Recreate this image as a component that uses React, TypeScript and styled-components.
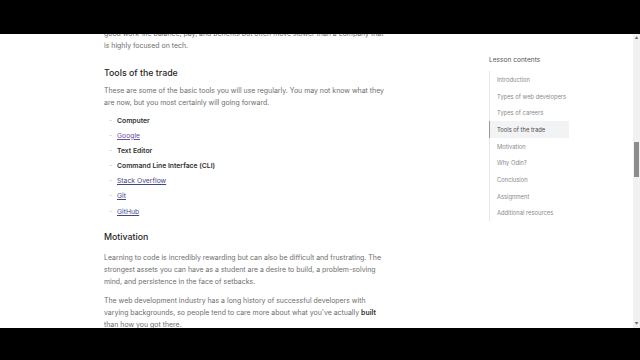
import styled, { createGlobalStyle } from "styled-components";

const GlobalStyle = createGlobalStyle`
  html, body {
    margin: 0;
    padding: 0;
    background: #000;
  }
  body {
    font-family: Inter, "Noto Sans", sans-serif;
    -webkit-font-smoothing: antialiased;
  }
`;

const tools = [
  { label: "Computer", link: false },
  { label: "Google", link: true, visited: true },
  { label: "Text Editor", link: false },
  { label: "Command Line Interface (CLI)", link: false },
  { label: "Stack Overflow", link: true },
  { label: "Git", link: true },
  { label: "GitHub", link: true },
];

const sections = [
  "Introduction",
  "Types of web developers",
  "Types of careers",
  "Tools of the trade",
  "Motivation",
  "Why Odin?",
  "Conclusion",
  "Assignment",
  "Additional resources",
];

const App = () => {
  return (
    <Frame>
      <GlobalStyle />
      <Letterbox $height={34} />
      <Viewport>
        <Article>
          <Paragraph>
            good work-life balance, pay, and benefits but often move slower than a company that
            is highly focused on tech.
          </Paragraph>

          <Heading>Tools of the trade</Heading>
          <Paragraph>
            These are some of the basic tools you will use regularly. You may not know what they
            are now, but you most certainly will going forward.
          </Paragraph>
          <ToolList>
            {tools.map(tool => (
              <ToolItem key={tool.label}>
                {tool.link ? (
                  <ToolLink href="#" $visited={tool.visited}>
                    {tool.label}
                  </ToolLink>
                ) : (
                  <Strong>{tool.label}</Strong>
                )}
              </ToolItem>
            ))}
          </ToolList>

          <Heading $gap={8}>Motivation</Heading>
          <Paragraph>
            Learning to code is incredibly rewarding but can also be difficult and frustrating. The
            strongest assets you can have as a student are a desire to build, a problem-solving
            mind, and persistence in the face of setbacks.
          </Paragraph>
          <Paragraph>
            The web development industry has a long history of successful developers with
            varying backgrounds, so people tend to care more about what you've actually{" "}
            <Strong>built</Strong> than how you got there.
          </Paragraph>
        </Article>

        <Sidebar>
          <SidebarTitle>Lesson contents</SidebarTitle>
          <Toc>
            {sections.map(s => (
              <TocItem key={s} $active={s === "Tools of the trade"}>
                {s}
              </TocItem>
            ))}
          </Toc>
        </Sidebar>

        <Scrollbar>
          <ScrollArrow>▲</ScrollArrow>
          <Track>
            <Thumb />
          </Track>
          <ScrollArrow>▼</ScrollArrow>
        </Scrollbar>
      </Viewport>
      <Letterbox $height={32} />
    </Frame>
  );
};

const Frame = styled.div`
  width: 640px;
  height: 360px;
  display: flex;
  flex-direction: column;
  background: #000;
  overflow: hidden;
`;

const Letterbox = styled.div<{ $height: number }>`
  height: ${p => p.$height}px;
  flex-shrink: 0;
  background: #000;
`;

const Viewport = styled.div`
  flex: 1;
  display: flex;
  background: #fff;
  overflow: hidden;
`;

const Article = styled.div`
  width: 280px;
  margin-top: -6px;
  margin-left: 104px;
  flex-shrink: 0;
`;

const Paragraph = styled.p`
  margin: 0 0 7px;
  font-size: 6.95px;
  line-height: 12px;
  color: #6e6e6e;
`;

const Heading = styled.h3<{ $gap?: number }>`
  margin: 14px 0 ${p => p.$gap ?? 5}px;
  font-size: 8.8px;
  line-height: 14px;
  font-weight: 500;
  color: #1f1f1f;
`;

const ToolList = styled.ul`
  list-style: none;
  margin: -2px 0 -1px;
  padding: 0;
  display: flex;
  flex-direction: column;
  gap: 3.2px;
`;

const ToolItem = styled.li`
  display: flex;
  align-items: center;
  height: 12px;
  font-size: 6.8px;
  color: #333;

  &::before {
    content: "-";
    width: 13px;
    padding-left: 5px;
    box-sizing: border-box;
    color: #bbb;
  }
`;

const Strong = styled.strong`
  font-weight: 600;
  color: #303030;
`;

const ToolLink = styled.a<{ $visited?: boolean }>`
  color: ${p => (p.$visited ? "#6a4fa3" : "#3f4787")};
  text-decoration: underline;
  text-underline-offset: 1px;
`;

const Sidebar = styled.div`
  margin-left: 105px;
  margin-top: 21px;
  width: 80px;
  flex-shrink: 0;
`;

const SidebarTitle = styled.div`
  font-size: 6.6px;
  line-height: 10px;
  color: #555;
  margin-bottom: 6px;
`;

const Toc = styled.ul`
  list-style: none;
  margin: 0;
  padding: 0;
  border-left: 1px solid #e6e6e6;
`;

const TocItem = styled.li<{ $active?: boolean }>`
  height: 16.7px;
  display: flex;
  align-items: center;
  padding-left: 7px;
  margin-left: -1px;
  font-size: 5.8px;
  color: ${p => (p.$active ? "#4a4a4a" : "#8a8a8a")};
  background: ${p => (p.$active ? "#f2f3f5" : "transparent")};
  border-left: 1px solid ${p => (p.$active ? "#9a9a9a" : "transparent")};
`;

const Scrollbar = styled.div`
  margin-left: auto;
  width: 7px;
  background: #f1f1f1;
  display: flex;
  flex-direction: column;
  align-items: center;
`;

const ScrollArrow = styled.div`
  height: 8px;
  font-size: 3.5px;
  line-height: 8px;
  color: #666;
`;

const Track = styled.div`
  flex: 1;
  width: 100%;
`;

const Thumb = styled.div`
  margin: 100px auto 0;
  width: 5px;
  height: 35px;
  background: #8c8c8c;
`;

export default App;
